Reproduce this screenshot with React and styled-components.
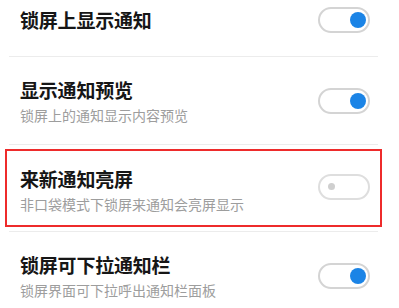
import React from "react";
import styled, { createGlobalStyle } from "styled-components";

const Global = createGlobalStyle`
  html, body { margin: 0; padding: 0; background: #ffffff; }
  body {
    font-family: "Noto Sans CJK SC", "Noto Sans", sans-serif;
    overflow: hidden;
  }
`;

const Page = styled.div`
  width: 399px;
  height: 308px;
  overflow: hidden;
  background: #fff;
`;

const List = styled.div`
  margin: 0 21px 0 9px;
  display: flex;
  flex-direction: column;
`;

const Row = styled.div`
  position: relative;
  display: flex;
  align-items: center;
  justify-content: space-between;
  box-sizing: border-box;
  height: ${(p) => p.$h}px;
  margin-top: ${(p) => p.$mt || 0}px;
  padding: 0 8px 0 11px;
  border-bottom: 1px solid #ececec;

  ${(p) =>
    p.$highlight &&
    `
    &::after {
      content: "";
      position: absolute;
      top: 4px;
      bottom: 4px;
      left: -4px;
      right: -4px;
      border: 2px solid #ee2b2b;
      pointer-events: none;
    }
  `}
`;

const TextCol = styled.div`
  display: flex;
  flex-direction: column;
  gap: 2px;
  margin-top: ${(p) => p.$shift || 0}px;
`;

const Title = styled.div`
  font-size: 19px;
  line-height: 26px;
  font-weight: 600;
  color: #161616;
  letter-spacing: -0.2px;
`;

const Sub = styled.div`
  font-size: 14px;
  line-height: 20px;
  color: #9d9d9d;
`;

const Toggle = styled.div`
  box-sizing: border-box;
  width: 52px;
  height: 26px;
  border-radius: 13px;
  border: 2px solid ${(p) => (p.$on ? "#d4d4d4" : "#dedede")};
  background: #fff;
  display: flex;
  align-items: center;
  justify-content: ${(p) => (p.$on ? "flex-end" : "flex-start")};
  padding: ${(p) => (p.$on ? "0 2px 0 0" : "0 0 0 8px")};
  flex-shrink: 0;
  margin-top: ${(p) => p.$shift || 0}px;
`;

const Knob = styled.div`
  width: ${(p) => (p.$on ? 16 : 7)}px;
  height: ${(p) => (p.$on ? 16 : 7)}px;
  border-radius: 50%;
  background: ${(p) => (p.$on ? "#1b84e6" : "#cfcfcf")};
`;

const items = [
  { title: "锁屏上显示通知", on: true, h: 73, mt: -16 },
  { title: "显示通知预览", sub: "锁屏上的通知显示内容预览", on: true, h: 88 },
  {
    title: "来新通知亮屏",
    sub: "非口袋模式下锁屏来通知会亮屏显示",
    on: false,
    h: 87,
    highlight: true,
    shift: 3,
    tshift: -3,
  },
  { title: "锁屏可下拉通知栏", sub: "锁屏界面可下拉呼出通知栏面板", on: true, h: 88 },
];

export default function App() {
  return (
    <Page>
      <Global />
      <List>
        {items.map((it) => (
          <Row key={it.title} $h={it.h} $mt={it.mt} $highlight={it.highlight}>
            <TextCol $shift={it.shift}>
              <Title>{it.title}</Title>
              {it.sub && <Sub>{it.sub}</Sub>}
            </TextCol>
            <Toggle $on={it.on} $shift={it.tshift}>
              <Knob $on={it.on} />
            </Toggle>
          </Row>
        ))}
      </List>
    </Page>
  );
}
